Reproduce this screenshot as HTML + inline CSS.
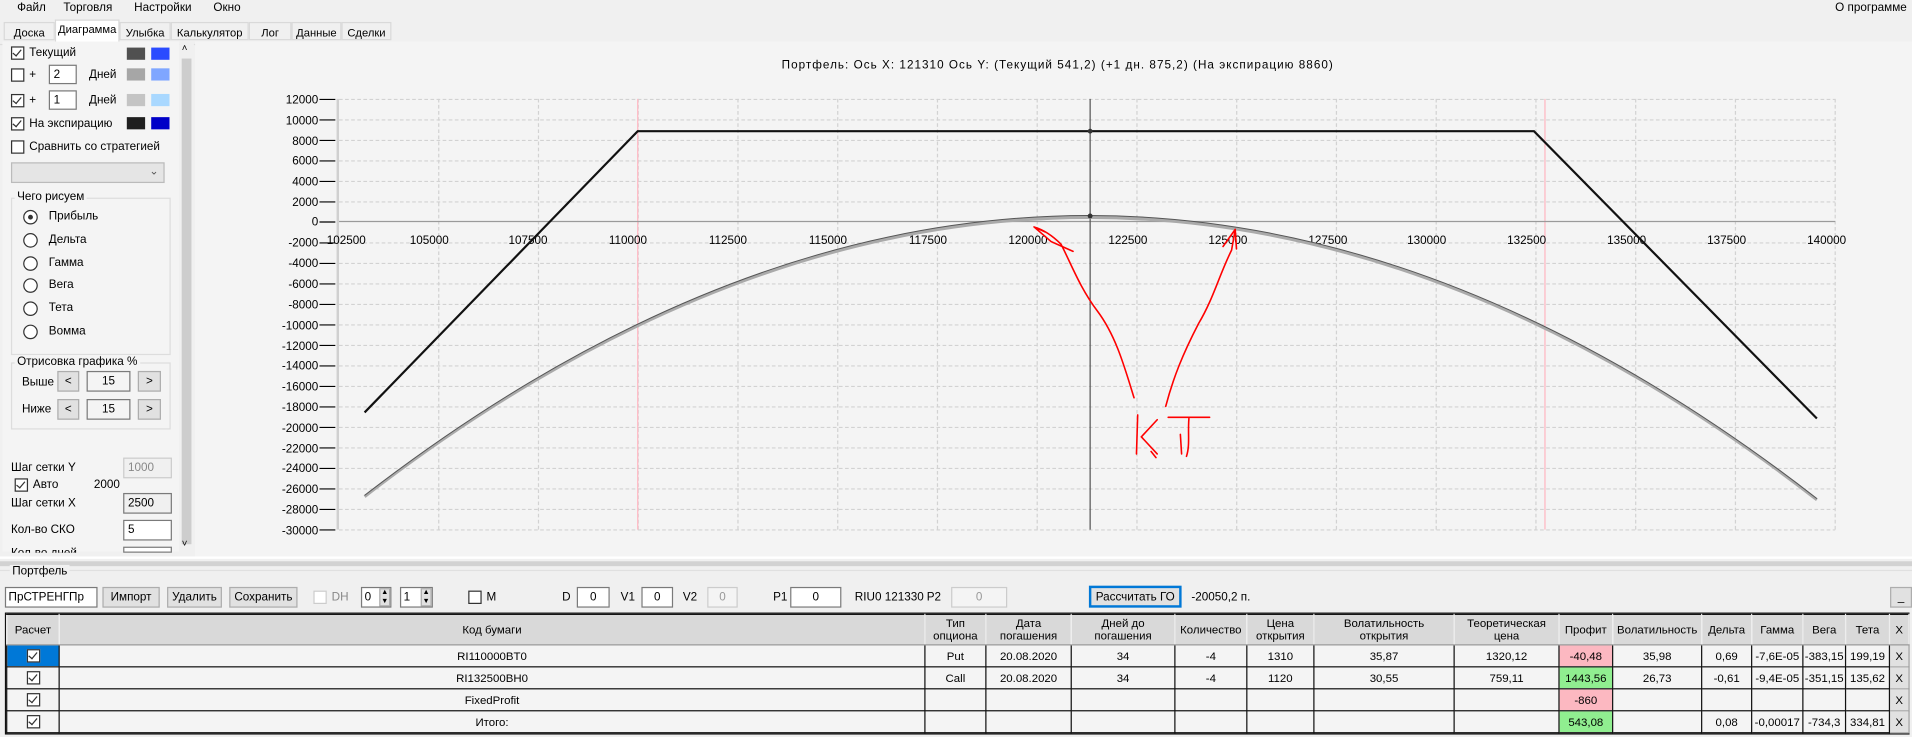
<!DOCTYPE html>
<html><head><meta charset="utf-8"><style>
html,body{margin:0;padding:0;width:1912px;height:737px;overflow:hidden;background:#f0f0f0}
#w{position:absolute;left:0;top:0;width:1568px;height:604px;transform-origin:0 0;transform:scale(1.21939,1.2202);font-family:"Liberation Sans",sans-serif;font-size:9.6px;color:#000;background:#f0f0f0}
.a{position:absolute;white-space:nowrap}
.cb{position:absolute;width:9px;height:9px;border:1px solid #333;background:#fff}
.ck::after{content:"";position:absolute;left:2px;top:0px;width:3px;height:6px;border:solid #333;border-width:0 1px 1px 0;transform:rotate(40deg)}
.tb{position:absolute;background:#fff;border:1px solid #7a7a7a;box-sizing:border-box;padding-left:3px;line-height:15px}
.bt{position:absolute;background:#e1e1e1;border:1px solid #adadad;box-sizing:border-box;text-align:center;line-height:15px}
.rd{position:absolute;width:10px;height:10px;border:1px solid #333;border-radius:50%;background:#fff}
.sw{position:absolute;width:15px;height:10px}
.tab{position:absolute;top:18px;height:15px;border:1px solid #d9d9d9;background:#f0f0f0;line-height:16px;text-align:center;font-size:9.2px;box-sizing:border-box}
table{border-collapse:collapse;position:absolute;left:5px;top:503px;table-layout:fixed}
td{border:1px solid #111;padding:0;text-align:center;height:17px;background:#f4f4f4;font-size:9.4px;overflow:hidden;white-space:nowrap}
tr.h td{background:#d9d9d9;height:24px;line-height:10px;border-color:#fff #ededed #999 #ededed;border-top:1px solid #111}
td.r{background:#fcb8c1}td.g{background:#90ee90}
td.x{background:#e1e1e1;border:1px solid #aaa}
</style></head><body><div id="w">
<div class="a" style="left:0;top:0;width:1568px;height:14px;background:#f0f0f0"></div>
<div class="a" style="left:14px;top:1px">Файл</div>
<div class="a" style="left:52px;top:1px">Торговля</div>
<div class="a" style="left:110px;top:1px">Настройки</div>
<div class="a" style="left:175px;top:1px">Окно</div>
<div class="a" style="left:1505px;top:1px">О программе</div>
<div class="a" style="left:0;top:16px;width:1568px;height:20px;background:#f0f0f0;border-bottom:1px solid #ddd"></div>
<div class="tab" style="left:3px;width:42px">Доска</div>
<div class="tab" style="left:45px;top:16px;width:53px;height:19px;background:#fff;border-bottom:none;line-height:15px">Диаграмма</div>
<div class="tab" style="left:98px;width:42px">Улыбка</div>
<div class="tab" style="left:140px;width:64px">Калькулятор</div>
<div class="tab" style="left:204px;width:35px">Лог</div>
<div class="tab" style="left:239px;width:41px">Данные</div>
<div class="tab" style="left:280px;width:41px">Сделки</div>
<div class="a" style="left:2px;top:34px;width:145px;height:418px;background:#f4f4f4"></div>
<div class="a" style="left:147px;top:34px;width:12px;height:418px;background:#f0f0f0"></div>
<div class="a" style="left:149px;top:48px;width:8px;height:398px;background:#cdcdcd"></div>
<div class="a" style="left:149px;top:35px;font-size:8px">˄</div>
<div class="a" style="left:149px;top:441px;font-size:8px">˅</div>
<div class="a" style="left:160px;top:34px;width:1408px;height:422px;background:#f4f4f4"></div>

<div class="cb ck" style="left:9px;top:38px"></div><div class="a" style="left:24px;top:38px">Текущий</div>
<div class="sw" style="left:104px;top:39px;background:#505050"></div><div class="sw" style="left:124px;top:39px;background:#2a4bff"></div>
<div class="cb" style="left:9px;top:56px"></div><div class="a" style="left:24px;top:56px">+</div>
<div class="tb" style="left:40px;top:53px;width:23px;height:16px">2</div><div class="a" style="left:73px;top:56px">Дней</div>
<div class="sw" style="left:104px;top:56px;background:#a6a6a6"></div><div class="sw" style="left:124px;top:56px;background:#7fa6ff"></div>
<div class="cb ck" style="left:9px;top:77px"></div><div class="a" style="left:24px;top:77px">+</div>
<div class="tb" style="left:40px;top:74px;width:23px;height:16px">1</div><div class="a" style="left:73px;top:77px">Дней</div>
<div class="sw" style="left:104px;top:77px;background:#c4c4c4"></div><div class="sw" style="left:124px;top:77px;background:#a9d8ff"></div>
<div class="cb ck" style="left:9px;top:96px"></div><div class="a" style="left:24px;top:96px">На экспирацию</div>
<div class="sw" style="left:104px;top:96px;background:#1f1f1f"></div><div class="sw" style="left:124px;top:96px;background:#0000c8"></div>
<div class="cb" style="left:9px;top:115px"></div><div class="a" style="left:24px;top:115px">Сравнить со стратегией</div>
<div class="a" style="left:9px;top:133px;width:126px;height:17px;background:#e5e5e5;border:1px solid #bbb;box-sizing:border-box"><span style="position:absolute;right:4px;top:1px;font-size:9px;color:#555">⌄</span></div>
<div class="a" style="left:9px;top:162px;width:131px;height:129px;border:1px solid #ddd;box-sizing:border-box"></div>
<div class="a" style="left:12px;top:156px;background:#f4f4f4;padding:0 2px">Чего рисуем</div>
<div class="rd" style="left:19px;top:172px"><div style="position:absolute;left:3px;top:3px;width:4px;height:4px;border-radius:50%;background:#333"></div></div><div class="a" style="left:40px;top:172px">Прибыль</div>
<div class="rd" style="left:19px;top:191px"></div><div class="a" style="left:40px;top:191px">Дельта</div>
<div class="rd" style="left:19px;top:210px"></div><div class="a" style="left:40px;top:210px">Гамма</div>
<div class="rd" style="left:19px;top:228px"></div><div class="a" style="left:40px;top:228px">Вега</div>
<div class="rd" style="left:19px;top:247px"></div><div class="a" style="left:40px;top:247px">Тета</div>
<div class="rd" style="left:19px;top:266px"></div><div class="a" style="left:40px;top:266px">Вомма</div>
<div class="a" style="left:9px;top:297px;width:131px;height:55px;border:1px solid #ddd;box-sizing:border-box"></div>
<div class="a" style="left:12px;top:291px;background:#f4f4f4;padding:0 2px">Отрисовка графика %</div>
<div class="a" style="left:18px;top:308px">Выше</div>
<div class="bt" style="left:47px;top:304px;width:18px;height:17px">&lt;</div>
<div class="tb" style="left:71px;top:304px;width:36px;height:17px;background:#f4f4f4;text-align:center;padding:0">15</div>
<div class="bt" style="left:113px;top:304px;width:19px;height:17px">&gt;</div>
<div class="a" style="left:18px;top:330px">Ниже</div>
<div class="bt" style="left:47px;top:327px;width:18px;height:17px">&lt;</div>
<div class="tb" style="left:71px;top:327px;width:36px;height:17px;background:#f4f4f4;text-align:center;padding:0">15</div>
<div class="bt" style="left:113px;top:327px;width:19px;height:17px">&gt;</div>
<div class="a" style="left:9px;top:378px">Шаг сетки Y</div>
<div class="tb" style="left:101px;top:375px;width:40px;height:17px;background:#f0f0f0;color:#888;border-color:#ccc">1000</div>
<div class="cb ck" style="left:12px;top:392px"></div><div class="a" style="left:27px;top:392px">Авто</div><div class="a" style="left:77px;top:392px">2000</div>
<div class="a" style="left:9px;top:407px">Шаг сетки X</div>
<div class="tb" style="left:101px;top:404px;width:40px;height:17px;background:#f0f0f0">2500</div>
<div class="a" style="left:9px;top:429px">Кол-во СКО</div>
<div class="tb" style="left:101px;top:426px;width:40px;height:17px">5</div>
<div class="a" style="left:9px;top:448px;height:5px;overflow:hidden">Кол-во дней</div>
<div class="tb" style="left:101px;top:448px;width:40px;height:5px;overflow:hidden">1</div>

<svg class="a" style="left:0;top:0" width="1568" height="604" viewBox="0 0 1568 604" font-family="Liberation Sans, sans-serif" font-size="9.6">
<text x="641" y="56" textLength="452" lengthAdjust="spacing">Портфель:  Ось X:  121310  Ось Y:   (Текущий 541,2)   (+1 дн. 875,2)   (На экспирацию 8860)</text>
<g stroke="#d2d2d2" stroke-dasharray="3,2" stroke-width="1">
<path d="M278 81.5H1505M278 98.3H1505M278 115.1H1505M278 131.9H1505M278 148.7H1505M278 165.5H1505M278 199.1H1505M278 215.9H1505M278 232.7H1505M278 249.5H1505M278 266.3H1505M278 283.1H1505M278 299.9H1505M278 316.7H1505M278 333.5H1505M278 350.3H1505M278 367.1H1505M278 383.9H1505M278 400.7H1505M278 417.5H1505M278 434.3H1505"/>
<path d="M359.8 81V434M441.6 81V434M523.4 81V434M605.2 81V434M687 81V434M768.8 81V434M850.6 81V434M932.4 81V434M1014.2 81V434M1096 81V434M1177.8 81V434M1259.6 81V434M1341.4 81V434M1423.2 81V434M1505 81V434"/>
</g>
<path d="M523 81V434M1267 81V434" stroke="#ffb6c1" stroke-width="1"/>
<path d="M277 81V434" stroke="#d0d0d0" stroke-width="2"/>
<path d="M278 181.5H1505" stroke="#9a9a9a" stroke-width="1"/>
<g stroke="#000" stroke-width="1">
<path d="M262 81.5H275M262 98.3H275M262 115.1H275M262 131.9H275M262 148.7H275M262 165.5H275M262 181.9H275M262 199.1H275M262 215.9H275M262 232.7H275M262 249.5H275M262 266.3H275M262 283.1H275M262 299.9H275M262 316.7H275M262 333.5H275M262 350.3H275M262 367.1H275M262 383.9H275M262 400.7H275M262 417.5H275M262 434.3H275"/>
</g>
<g text-anchor="end">
<text x="261" y="85">12000</text><text x="261" y="102">10000</text><text x="261" y="119">8000</text><text x="261" y="135">6000</text><text x="261" y="152">4000</text><text x="261" y="169">2000</text><text x="261" y="185">0</text><text x="261" y="202">-2000</text><text x="261" y="219">-4000</text><text x="261" y="236">-6000</text><text x="261" y="253">-8000</text><text x="261" y="270">-10000</text><text x="261" y="287">-12000</text><text x="261" y="303">-14000</text><text x="261" y="320">-16000</text><text x="261" y="337">-18000</text><text x="261" y="354">-20000</text><text x="261" y="371">-22000</text><text x="261" y="387">-24000</text><text x="261" y="404">-26000</text><text x="261" y="421">-28000</text><text x="261" y="438">-30000</text>
</g>
<g text-anchor="middle">
<text x="284" y="200">102500</text><text x="352" y="200">105000</text><text x="433" y="200">107500</text><text x="515" y="200">110000</text><text x="597" y="200">112500</text><text x="679" y="200">115000</text><text x="761" y="200">117500</text><text x="843" y="200">120000</text><text x="925" y="200">122500</text><text x="1007" y="200">125000</text><text x="1089" y="200">127500</text><text x="1170" y="200">130000</text><text x="1252" y="200">132500</text><text x="1334" y="200">135000</text><text x="1416" y="200">137500</text><text x="1498" y="200">140000</text>
</g>
<path d="M894 81V434" stroke="#555" stroke-width="1"/>
<path d="M299 407Q894.5 -52 1490 409.6" fill="none" stroke="#aaa" stroke-width="2.5"/>
<path d="M299 406Q894.5 -54 1490 408.6" fill="none" stroke="#555" stroke-width="0.8"/>
<path d="M299 338L523 107.5H1258L1490 343" fill="none" stroke="#111" stroke-width="1.8"/>
<circle cx="894" cy="107.5" r="2" fill="#333"/><circle cx="894" cy="177" r="2" fill="#333"/>
<g fill="none" stroke="#f00" stroke-width="1.3" stroke-linecap="round">
<path d="M930 326C922 300 915 275 900 255C885 235 878 215 870 200C862 192 855 188 848 186M848 186L857 190M848 186L862 198L880 206"/>
<path d="M956 333C962 310 970 290 983 265C995 245 1000 225 1010 205L1013 188M1013 188L1003 202M1013 188L1014 204"/>
<path d="M933 340L932 372M949 344L936 358L949 372M944 370L948 375"/>
<path d="M958 342H992M975 343C974 355 976 365 973 374M968 356L969 372"/>
</g>
</svg>

<div class="a" style="left:0;top:456px;width:1568px;height:2px;background:#fff"></div>
<div class="a" style="left:0;top:460px;width:1568px;height:4px;background:#d2d2d2"></div>
<div class="a" style="left:0;top:467px;width:1568px;height:1px;background:#e0e0e0"></div>
<div class="a" style="left:8px;top:463px;background:#f0f0f0;padding:0 2px">Портфель</div>
<div class="tb" style="left:4px;top:481px;width:76px;height:17px;padding-left:2px">ПрСТРЕНГПр <span style="color:#666;font-size:9px">⌄</span></div>
<div class="bt" style="left:84px;top:481px;width:47px;height:17px">Импорт</div>
<div class="bt" style="left:137px;top:481px;width:45px;height:17px">Удалить</div>
<div class="bt" style="left:188px;top:481px;width:56px;height:17px">Сохранить</div>
<div class="cb" style="left:257px;top:484px;border-color:#ccc"></div><div class="a" style="left:272px;top:484px;color:#888">DH</div>
<div class="tb" style="left:296px;top:481px;width:25px;height:17px;padding-left:2px">0</div><div class="bt" style="left:311px;top:482px;width:9px;height:15px;font-size:6px;line-height:7px">▲<br>▼</div>
<div class="tb" style="left:328px;top:481px;width:27px;height:17px;padding-left:2px">1</div><div class="bt" style="left:345px;top:482px;width:9px;height:15px;font-size:6px;line-height:7px">▲<br>▼</div>
<div class="cb" style="left:384px;top:484px"></div><div class="a" style="left:399px;top:484px">M</div>
<div class="a" style="left:461px;top:484px">D</div><div class="tb" style="left:473px;top:481px;width:27px;height:17px;text-align:center;padding:0">0</div>
<div class="a" style="left:509px;top:484px">V1</div><div class="tb" style="left:526px;top:481px;width:26px;height:17px;text-align:center;padding:0">0</div>
<div class="a" style="left:560px;top:484px">V2</div><div class="tb" style="left:580px;top:481px;width:25px;height:17px;text-align:center;padding:0;color:#999;border-color:#ccc;background:#f4f4f4">0</div>
<div class="a" style="left:634px;top:484px">P1</div><div class="tb" style="left:648px;top:481px;width:42px;height:17px;text-align:center;padding:0">0</div>
<div class="a" style="left:701px;top:484px">RIU0 121330</div>
<div class="a" style="left:760px;top:484px">P2</div><div class="tb" style="left:780px;top:481px;width:46px;height:17px;text-align:center;padding:0;color:#999;border-color:#ccc;background:#f4f4f4">0</div>
<div class="bt" style="left:893px;top:480px;width:76px;height:18px;border:2px solid #0078d7">Рассчитать ГО</div>
<div class="a" style="left:977px;top:484px">-20050,2 п.</div>
<div class="bt" style="left:1550px;top:481px;width:18px;height:17px">_</div>
<div class="a" style="left:4px;top:502px;width:1562px;height:100px;border:1px solid #111;box-sizing:border-box;background:#f4f4f4"></div>
<table>
<colgroup><col style="width:43px"><col style="width:710px"><col style="width:50px"><col style="width:70px"><col style="width:85px"><col style="width:59px"><col style="width:55px"><col style="width:115px"><col style="width:86px"><col style="width:44px"><col style="width:73px"><col style="width:41px"><col style="width:42px"><col style="width:35px"><col style="width:36px"><col style="width:16px"></colgroup>
<tr class="h"><td>Расчет</td><td>Код бумаги</td><td>Тип<br>опциона</td><td>Дата<br>погашения</td><td>Дней до<br>погашения</td><td>Количество</td><td>Цена<br>открытия</td><td>Волатильность<br>открытия</td><td>Теоретическая<br>цена</td><td>Профит</td><td>Волатильность</td><td>Дельта</td><td>Гамма</td><td>Вега</td><td>Тета</td><td>X</td></tr>
<tr><td style="background:#0078d7;position:relative"><div class="cb ck" style="left:16px;top:3px"></div></td><td>RI110000BT0</td><td>Put</td><td>20.08.2020</td><td>34</td><td>-4</td><td>1310</td><td>35,87</td><td>1320,12</td><td class="r">-40,48</td><td>35,98</td><td>0,69</td><td>-7,6E-05</td><td>-383,15</td><td>199,19</td><td class="x">X</td></tr>
<tr><td style="position:relative"><div class="cb ck" style="left:16px;top:3px"></div></td><td>RI132500BH0</td><td>Call</td><td>20.08.2020</td><td>34</td><td>-4</td><td>1120</td><td>30,55</td><td>759,11</td><td class="g">1443,56</td><td>26,73</td><td>-0,61</td><td>-9,4E-05</td><td>-351,15</td><td>135,62</td><td class="x">X</td></tr>
<tr><td style="position:relative"><div class="cb ck" style="left:16px;top:3px"></div></td><td>FixedProfit</td><td></td><td></td><td></td><td></td><td></td><td></td><td></td><td class="r">-860</td><td></td><td></td><td></td><td></td><td></td><td class="x">X</td></tr>
<tr><td style="position:relative"><div class="cb ck" style="left:16px;top:3px"></div></td><td>Итого:</td><td></td><td></td><td></td><td></td><td></td><td></td><td></td><td class="g">543,08</td><td></td><td>0,08</td><td>-0,00017</td><td>-734,3</td><td>334,81</td><td class="x">X</td></tr>
</table>
</div></body></html>
